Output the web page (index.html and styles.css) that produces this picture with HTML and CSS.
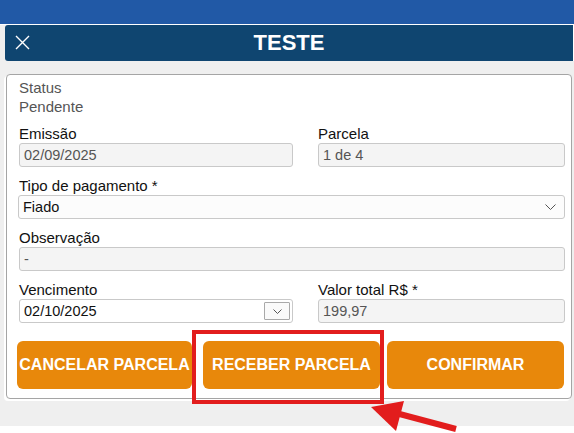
FILE: index.html
```html
<!DOCTYPE html>
<html lang="pt-BR">
<head>
    <meta charset="UTF-8">
    <meta name="viewport" content="width=device-width, initial-scale=1.0">
    <title>Teste</title>
    <link rel="stylesheet" href="styles.css">
</head>
<body>
    <div class="page">
        <!-- Top bar -->
        <div class="topbar"></div>

        <!-- Modal header -->
        <div class="header">
            <span class="close-btn" aria-label="Fechar">
                <svg width="15" height="15" viewBox="0 0 15 15">
                    <path d="M1 1 L14 14 M14 1 L1 14" stroke="#fff" stroke-width="1.4" fill="none"/>
                </svg>
            </span>
            <h1 class="header-title">TESTE</h1>
        </div>

        <!-- Form card -->
        <div class="card">
            <div class="status-label">Status</div>
            <div class="status-value">Pendente</div>

            <div class="row two-cols">
                <div class="field">
                    <label class="field-label">Emissão</label>
                    <div class="input readonly">02/09/2025</div>
                </div>
                <div class="field">
                    <label class="field-label">Parcela</label>
                    <div class="input readonly">1 de 4</div>
                </div>
            </div>

            <div class="row">
                <div class="field">
                    <label class="field-label">Tipo de pagamento *</label>
                    <div class="input select">
                        <span>Fiado</span>
                        <svg class="chevron" width="11" height="6" viewBox="0 0 11 6">
                            <path d="M0.5 0.5 L5.5 5.5 L10.5 0.5" stroke="#555" stroke-width="1" fill="none"/>
                        </svg>
                    </div>
                </div>
            </div>

            <div class="row">
                <div class="field">
                    <label class="field-label">Observação</label>
                    <div class="input readonly">-</div>
                </div>
            </div>

            <div class="row two-cols">
                <div class="field">
                    <label class="field-label">Vencimento</label>
                    <div class="input date">
                        <span>02/10/2025</span>
                        <span class="date-btn">
                            <svg width="9" height="5" viewBox="0 0 9 5">
                                <path d="M0.5 0.5 L4.5 4.5 L8.5 0.5" stroke="#555" stroke-width="1" fill="none"/>
                            </svg>
                        </span>
                    </div>
                </div>
                <div class="field">
                    <label class="field-label">Valor total R$ *</label>
                    <div class="input readonly">199,97</div>
                </div>
            </div>

            <div class="actions">
                <button class="action-btn btn-cancel">CANCELAR PARCELA</button>
                <button class="action-btn btn-receive">RECEBER PARCELA</button>
                <button class="action-btn btn-confirm">CONFIRMAR</button>
            </div>
        </div>

        <!-- Highlight annotation -->
        <div class="highlight-box"></div>
        <svg class="highlight-arrow" width="574" height="433" viewBox="0 0 574 433">
            <path d="M456 429 L392 412" stroke="#e21d1d" stroke-width="6" fill="none"/>
            <polygon points="371,407 404,401 396,431" fill="#e21d1d"/>
        </svg>
    </div>
</body>
</html>
```

FILE: styles.css
```css
* {
    box-sizing: border-box;
    margin: 0;
    padding: 0;
}

body {
    background: #ffffff;
    font-family: 'Liberation Sans', Arial, sans-serif;
    width: 574px;
    height: 433px;
    overflow: hidden;
}

.page {
    position: relative;
    background: #efefef;
    padding-bottom: 27px;
}

/* Top bar + header */
.topbar {
    height: 25px;
    background: #2159a6;
    border-bottom: 1px solid #ffffff;
}

.header {
    position: relative;
    height: 36px;
    margin-left: 5px;
    border-right: 1px solid #ffffff;
    background: #0f4570;
    border-radius: 3px 0 0 3px;
    display: flex;
    align-items: center;
    justify-content: center;
}

.close-btn {
    position: absolute;
    left: 10px;
    top: 10px;
    display: flex;
}

.header-title {
    color: #ffffff;
    font-size: 22px;
    font-weight: bold;
    line-height: 36px;
}

/* Card */
.card {
    margin: 13px 2px 0 6px;
    padding: 3px 6px 9px 12px;
    background: #ffffff;
    border: 1px solid #a5a5a5;
    border-radius: 4px;
    box-shadow: -2px 2px 0 #ffffff;
}

.status-label,
.status-value {
    color: #555555;
    font-size: 15px;
    line-height: 19px;
}

.status-value {
    margin-bottom: 5px;
}

.row {
    margin-bottom: 6px;
}

.two-cols {
    display: grid;
    grid-template-columns: 274px 1fr;
    column-gap: 25px;
}

.field-label {
    display: block;
    height: 22px;
    padding-top: 3px;
    line-height: 19px;
    font-size: 15px;
    color: #111111;
}

.input {
    height: 24px;
    border: 1px solid #c9c9c9;
    border-radius: 3px;
    padding: 0 4px;
    font-size: 14.5px;
    line-height: 22px;
    color: #111111;
    background: #ffffff;
    white-space: nowrap;
}

.input.readonly {
    background: #f4f4f4;
    color: #555555;
}

.input.select {
    display: flex;
    justify-content: space-between;
    align-items: center;
    margin-left: -1px;
    background: #fcfcfc;
}

.chevron {
    margin-right: 4px;
}

.input.date {
    display: flex;
    justify-content: space-between;
    align-items: center;
    padding-right: 2px;
}

.date-btn {
    width: 26px;
    height: 18px;
    border: 1px solid #a9a9a9;
    border-radius: 1px;
    display: flex;
    align-items: center;
    justify-content: center;
    background: #fafafa;
}

/* Buttons */
.actions {
    display: flex;
    margin-top: 18px;
    margin-left: -2px;
}

.action-btn {
    height: 48px;
    border: none;
    border-radius: 6px;
    background: #e8880b;
    color: #ffffff;
    font-family: 'Liberation Sans', Arial, sans-serif;
    font-size: 16px;
    font-weight: bold;
    white-space: nowrap;
    overflow: hidden;
    padding: 0;
}

.btn-cancel {
    width: 175px;
}

.btn-receive {
    width: 177px;
    margin-left: 11px;
}

.btn-confirm {
    width: 177px;
    margin-left: 7px;
}

/* Annotation overlay */
.highlight-box {
    position: absolute;
    left: 192px;
    top: 330px;
    width: 192px;
    height: 74px;
    border: 4px solid #e21d1d;
}

.highlight-arrow {
    position: absolute;
    left: 0;
    top: 0;
    pointer-events: none;
}
```
